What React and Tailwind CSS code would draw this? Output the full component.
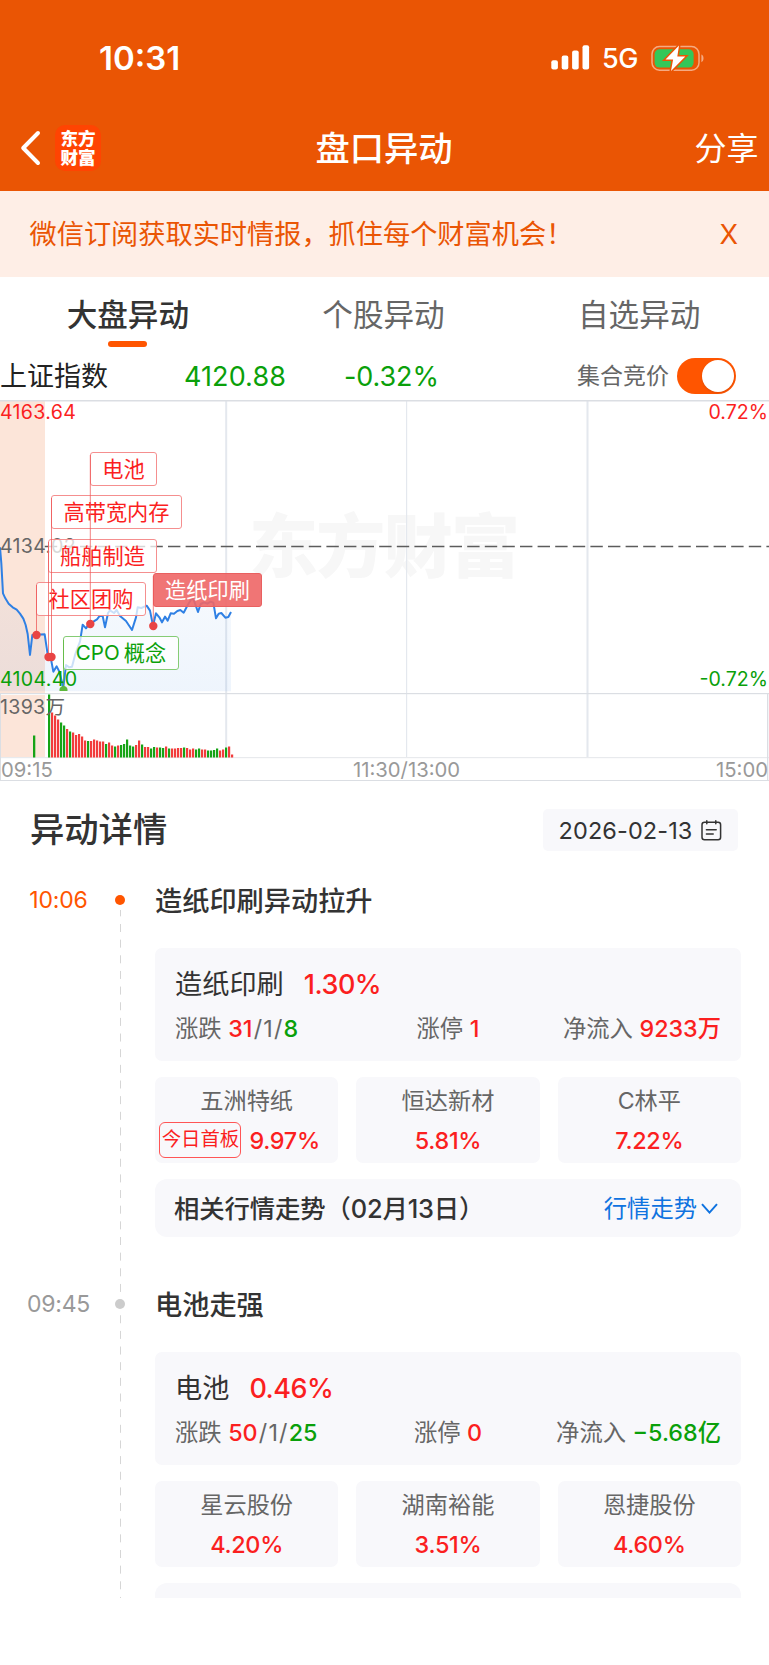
// Volume bars: [height, colour flag] every 3px, starting at the 09:30 bar
const VOLUME = [
  [63, 0], [45, 1], [42, 1], [38, 1], [35, 0], [32, 0], [28.5, 1], [26, 0], [25, 1], [22.5, 1], [23.5, 1], [21, 1],
  [17, 1], [16.5, 0], [16.5, 1], [18, 1], [17, 1], [16, 1], [16, 1], [13.5, 0], [15, 1], [12, 1], [11, 0], [12, 1], [12.5, 0], [13.5, 0],
  [18, 0], [12, 0], [11, 0], [12.5, 1], [17, 1], [13, 0], [10.5, 1], [10.5, 1], [9, 0], [10.5, 0], [10, 1], [10, 0], [9.5, 0], [11, 1],
  [9, 0], [9, 1], [9, 1], [9.5, 1], [9.5, 1], [10, 0], [9.5, 1], [8, 1], [9, 1], [8, 0], [9, 0], [8, 1], [8, 1], [7, 0], [7, 0], [7.5, 0],
  [9, 0], [7, 1], [8, 1], [10, 0], [11, 1], [3, 1],
];

const LINE =
  "0,52 4,100 9,190 16,205 26,221 38,232 50,239 60,251 70,266 77,285 83,312 90,375 97,315 134,313 144,380 152,382 160,425 170,409 178,425 190,472 198,405 208,412 216,410 226,372 240,335 248,284 258,295 268,280 280,275 291,268 299,258 308,258 315,292 324,249 330,241 342,249 350,240 360,258 378,273 396,300 408,262 413,232 424,234 440,227 450,242 459,287 468,250 478,262 486,277 495,260 503,272 512,250 522,251 532,243 541,240 551,248 562,227 576,204 582,212 594,246 602,222 612,217 622,221 632,215 640,218 648,265 656,251 664,249 676,263 685,261 693,246";

function Tag({ className, children }) {
  return (
    <div
      className={
        "absolute flex items-center justify-center whitespace-nowrap rounded-[3px] border pt-px text-[21.2px] leading-none " + className
      }
    >
      {children}
    </div>
  );
}

function StatusBar() {
  return (
    <div className="flex h-[106px] items-center justify-between pl-[99px] pr-[64px] pt-[10px]">
      <span className="text-[33px] font-semibold leading-none">10:31</span>
      <div className="flex items-center">
        <svg className="-mt-px" width="39" height="25" viewBox="0 0 39 25" fill="#fff">
          <rect x="0.3" y="15.3" width="6.6" height="9.2" rx="2" />
          <rect x="10.7" y="10.6" width="6.6" height="13.9" rx="2" />
          <rect x="21.1" y="5.4" width="6.6" height="19.1" rx="2" />
          <rect x="31.5" y="0.2" width="6.6" height="24.3" rx="2" />
        </svg>
        <span className="ml-[12px] mt-px w-[37px] text-[27px] font-medium leading-none tracking-[-0.5px]">5G</span>
        <svg className="-mt-px ml-[12px]" width="54" height="28" viewBox="0 0 54 28">
          <rect x="1" y="2.6" width="47" height="23.6" rx="7.5" fill="none" stroke="#f5aa82" strokeWidth="1.5" />
          <path d="M50.4 10.6c2.8 1 2.8 6.6 0 7.6z" fill="#f5aa82" />
          <rect x="3.6" y="5.2" width="39" height="18.4" rx="5" fill="#34c759" />
          <path d="M28 1.5 14.5 15.4h7.6L20 27 34.3 12.4h-8z" fill="#fff" stroke="#ea5504" strokeWidth="3" paintOrder="stroke" />
        </svg>
      </div>
    </div>
  );
}

function NavBar() {
  return (
    <div className="grid h-[85px] grid-cols-[1fr_auto_1fr] items-center pb-px">
      <div className="flex items-center pl-[20px]">
        <svg width="21" height="36" viewBox="0 0 21 36" fill="none" stroke="#fff" strokeWidth="4" strokeLinecap="round" strokeLinejoin="round">
          <path d="M18 3 3.2 18 18 33" />
        </svg>
        <div className="ml-[14px] flex h-[46px] w-[46px] flex-col items-center justify-center rounded-[10px] bg-[#ff4402] text-[17.6px] font-black leading-[19px]">
          <span>东方</span>
          <span>财富</span>
        </div>
      </div>
      <h1 className="pr-px pt-[2px] text-[34.3px] font-medium leading-none">盘口异动</h1>
      <span className="pr-[10.5px] pt-[2px] text-right text-[32px] leading-none">分享</span>
    </div>
  );
}

function Chart() {
  return (
    <div className="relative h-[381px] overflow-hidden">
      <svg className="absolute left-0 top-0" width="769" height="381" viewBox="0 400 769 381">
        <rect x="0" y="401" width="45" height="292" fill="#fce5d9" />
        <rect x="0" y="695" width="45" height="62" fill="#fce5d9" />
        <text x="249" y="572" fontSize="69" fontWeight="900" fill="#f7f7f7" textLength="271">东方财富</text>
        <g fill="#e4e8ee">
          <rect x="225.2" y="401" width="2" height="356" />
          <rect x="406" y="401" width="1.2" height="356" />
          <rect x="586.5" y="401" width="2" height="356" />
        </g>
        <g fill="#dbdee3">
          <rect x="0" y="400" width="769" height="1.5" />
          <rect x="0" y="693" width="769" height="1.2" />
          <rect x="0" y="757" width="769" height="1.2" fill="#e8eaed" />
          <rect x="0" y="780" width="769" height="1" />
          <rect x="0" y="693" width="1" height="88" />
          <rect x="767" y="693" width="1.3" height="88" />
        </g>
        <line x1="44.8" y1="546.5" x2="769" y2="546.5" stroke="#5c5c5c" strokeWidth="1.4" strokeDasharray="12.4 5.2" />
        <defs>
          <linearGradient id="area" x1="0" y1="0" x2="0" y2="1">
            <stop offset="0" stopColor="#2f7fe0" stopOpacity="0.03" />
            <stop offset="1" stopColor="#2f7fe0" stopOpacity="0.08" />
          </linearGradient>
        </defs>
        <g transform="translate(0 530) scale(0.33333)">
          <polygon points={"0,484 " + LINE + " 693,484"} fill="url(#area)" />
          <polyline points={LINE} fill="none" stroke="#2f80e4" strokeWidth="6" strokeLinejoin="round" />
        </g>
        <rect x="33" y="735.5" width="2.3" height="22" fill="#16a316" />
        {VOLUME.map(([h, up], i) => (
          <rect key={i} x={48 + i * 3} y={757.5 - h} width="2.2" height={h} fill={up ? "#f23c3c" : "#16a316"} />
        ))}
      </svg>

      <span className="absolute left-0 top-[3px] text-[19.6px] leading-none tracking-[0.3px] text-[#fb1f1f]">4163.64</span>
      <span className="absolute right-[1px] top-[3px] text-[19.6px] leading-none text-[#fb1f1f]">0.72%</span>
      <span className="absolute left-0 top-[137px] text-[19.6px] leading-none tracking-[0.3px] text-[#666]">4134.02</span>
      <span className="absolute right-[1px] top-[270px] text-[19.6px] leading-none text-[#0aa00a]">-0.72%</span>
      <span className="absolute left-0 top-[298px] text-[19.6px] leading-none tracking-[0.3px] text-[#666]">1393万</span>

      <Tag className="left-[90px] top-[52px] h-[34px] w-[67px] border-[#f58f8f] bg-white/75 text-[#fb1f1f]">电池</Tag>
      <Tag className="left-[51px] top-[95px] h-[34px] w-[131px] border-[#f58f8f] bg-white/75 text-[#fb1f1f]">高带宽内存</Tag>
      <Tag className="left-[48px] top-[139px] h-[34px] w-[109px] border-[#f58f8f] bg-white/75 text-[#fb1f1f]">船舶制造</Tag>
      <Tag className="left-[36px] top-[182px] h-[34px] w-[110px] border-[#f58f8f] bg-white/75 text-[#fb1f1f]">社区团购</Tag>
      <Tag className="left-[153px] top-[173px] h-[34px] w-[109px] border-[#e96060] bg-[#ee6666]/90 text-white">造纸印刷</Tag>
      <Tag className="left-[63px] top-[236px] h-[34px] w-[116px] gap-[4px] border-[#85cc75] bg-white/75 text-[#0aa00a]">
        <span className="text-[20.6px]">CPO</span>
        <span>概念</span>
      </Tag>

      <svg className="absolute left-0 top-0" width="769" height="381" viewBox="0 400 769 381">
        <g stroke="#ee5555" strokeOpacity="0.75" strokeWidth="1">
          <line x1="90.3" y1="455" x2="90.3" y2="624" />
          <line x1="51.5" y1="498" x2="51.5" y2="656" />
          <line x1="48.5" y1="542" x2="48.5" y2="656" />
          <line x1="36.5" y1="585" x2="36.5" y2="635" />
          <line x1="153.3" y1="576" x2="153.3" y2="626" />
          <line x1="63.5" y1="640" x2="63.5" y2="688" stroke="#5cb83c" />
        </g>
        <g fill="#e94444">
          <circle cx="36.5" cy="635" r="4.2" />
          <circle cx="48.5" cy="657" r="4.2" />
          <circle cx="51.5" cy="657" r="4.2" />
          <circle cx="90.3" cy="624" r="4.2" />
          <circle cx="153.3" cy="626" r="4.2" />
        </g>
        <path d="M59.5 691v-2a4.2 4.2 0 0 1 8 0v2z" fill="#5cb83c" />
      </svg>
      <span className="absolute left-0 top-[270px] text-[19.6px] leading-none tracking-[0.3px] text-[#0aa00a]">4104.40</span>

      <div className="absolute inset-x-0 bottom-0 grid h-[22px] grid-cols-[1fr_auto_1fr] items-center px-px text-[20.3px] leading-none text-[#999]">
        <span>09:15</span>
        <span className="pl-[44px]">11:30/13:00</span>
        <span className="text-right">15:00</span>
      </div>
    </div>
  );
}

function Stock({ name, pct, badge }) {
  return (
    <div className="flex h-[86px] flex-1 flex-col items-center rounded-[7px] bg-[#f8f8fb] pt-[12px]">
      <div className="text-[23.2px] leading-[24px] text-[#666]">{name}</div>
      <div className={"mt-[9px] flex h-[36px] items-center " + (badge ? "pr-[14px]" : "")}>
        {badge && (
          <span className="mr-[8px] flex h-[36px] w-[82px] items-center justify-center whitespace-nowrap rounded-[6px] border border-[#f55] text-[19.4px] leading-none text-[#fb1f1f]">
            {badge}
          </span>
        )}
        <span className="pt-px text-[23.4px] font-medium leading-none tracking-[-0.3px] text-[#fb1f1f]">{pct}</span>
      </div>
    </div>
  );
}

function Event({ time, active, title, sector, pct, up, flat, down, limit, flow, flowDown, stocks }) {
  return (
    <section className="flex h-[404px]">
      <div className={"w-[114px] pl-[3px] pt-[5px] text-center text-[23px] leading-none tracking-[-0.2px] " + (active ? "text-[#ff5500]" : "text-[#999]")}>
        {time}
      </div>
      <div className="flex h-[20px] w-[13px] items-center justify-center self-start bg-white pr-px mt-[6px]">
        <div className={"h-[10px] w-[10px] rounded-full " + (active ? "bg-[#ff5500]" : "bg-[#ccc]")} />
      </div>
      <div className="ml-[28px] w-[586px]">
        <h3 className="h-[64px] pt-[4px] text-[27.2px] font-medium leading-none text-[#333]">{title}</h3>
        <div className="h-[113px] rounded-[7px] bg-[#f8f8fb] px-[20px] pt-[23px]">
          <div className="flex items-center leading-[28px]">
            <span className="text-[27.2px] text-[#333]">{sector}</span>
            <span className="ml-[20px] text-[27px] font-medium tracking-[-0.5px] text-[#fb1f1f]">{pct}</span>
          </div>
          <div className="mt-[17px] grid grid-cols-[1fr_auto_1fr] text-[23.3px] leading-[26px] text-[#666]">
            <div>
              涨跌{" "}
              <span className="font-medium text-[#fb1f1f]">{up}</span>
              <span className="mx-[1.2px]">/</span>
              {flat}
              <span className="mx-[1.2px]">/</span>
              <span className="font-medium text-[#0aa00a]">{down}</span>
            </div>
            <div>
              涨停 <span className="font-medium text-[#fb1f1f]">{limit}</span>
            </div>
            <div className="text-right">
              净流入 <span className={"font-medium " + (flowDown ? "text-[#0aa00a]" : "text-[#fb1f1f]")}>{flow}</span>
            </div>
          </div>
        </div>
        <div className="mt-[16px] flex gap-[18px]">
          {stocks.map((s) => (
            <Stock key={s.name} {...s} />
          ))}
        </div>
        <div className="mt-[16px] flex h-[58px] items-center justify-between rounded-[12px] bg-[#f8f8fb] pl-[19px] pr-[23px] pt-[2px]">
          <span className="text-[25.4px] font-medium leading-none tracking-[-0.15px] text-[#333]">相关行情走势（02月13日）</span>
          <span className="flex items-center text-[23.3px] leading-none text-[#0f73e0]">
            行情走势
            <svg className="ml-[4px]" width="17" height="12" viewBox="0 0 17 12" fill="none" stroke="#0f73e0" strokeWidth="2">
              <path d="M1 1.2 8.5 9.6 16 1.2" />
            </svg>
          </span>
        </div>
      </div>
    </section>
  );
}

export default function App() {
  return (
    <div className="h-[1665px] w-[769px] overflow-hidden bg-white font-['Inter','Noto_Sans_CJK_SC',sans-serif]">
      <header className="h-[191px] bg-[#ea5504] text-white">
        <StatusBar />
        <NavBar />
      </header>

      <div className="flex h-[86px] items-center justify-between bg-[#feeee6] pl-[29.5px] pr-[31px] pt-[2px] text-[27.2px] leading-none text-[#ea5504]">
        <span>微信订阅获取实时情报，抓住每个财富机会！</span>
        <span>X</span>
      </div>

      <nav className="grid h-[76px] grid-cols-3 pr-[2px] pt-[22px] text-center text-[30.6px] leading-[31px] text-[#666]">
        <div className="flex flex-col items-center font-medium text-[#333]">
          大盘异动
          <div className="mt-[11px] h-[6px] w-[39px] rounded-full bg-[#ff5500]" />
        </div>
        <div>个股异动</div>
        <div>自选异动</div>
      </nav>

      <div className="flex h-[47px] items-center pb-px text-[27px] leading-none">
        <span className="w-[184px] text-[#222]">上证指数</span>
        <span className="w-[160px] tracking-[0.1px] text-[#0aa00a]">4120.88</span>
        <span className="tracking-[-0.1px] text-[#0aa00a]">-0.32%</span>
        <span className="ml-auto mr-[8px] text-[23px] text-[#666]">集合竞价</span>
        <div className="mr-[33px] flex h-[36px] w-[59px] items-center justify-end rounded-full bg-[#ff5500] pr-[2px]">
          <div className="h-[32px] w-[32px] rounded-full bg-white shadow" />
        </div>
      </div>

      <Chart />

      <div className="flex h-[97px] items-center justify-between pl-[30px] pr-[31px] pt-px">
        <h2 className="pt-px text-[34.3px] font-medium leading-none text-[#333]">异动详情</h2>
        <div className="flex h-[42px] w-[195px] items-center justify-center gap-[9px] rounded-[5px] bg-[#f8f8fb] text-[23.5px] leading-none text-[#333]">
          <span className="pt-px tracking-[0.1px]">2026-02-13</span>
          <svg width="21" height="21" viewBox="0 0 21 21" fill="none" stroke="#333" strokeWidth="1.5" strokeLinecap="round">
            <rect x="1" y="2.2" width="18.6" height="17.6" rx="2.5" />
            <path d="M5.8 0.8v3M14.8 0.8v3M5.4 9.8h9.8M5.4 14h6.8" />
          </svg>
        </div>
      </div>

      <main className="relative h-[720px] overflow-hidden">
        <svg className="absolute left-[120px] top-0" width="2" height="720">
          <line x1="0.5" y1="14.7" x2="0.5" y2="720" stroke="#d6d6d6" strokeWidth="1" strokeDasharray="8 7.65" />
        </svg>
        <div className="relative pt-[6px]">
          <Event
            active
            time="10:06"
            title="造纸印刷异动拉升"
            sector="造纸印刷"
            pct="1.30%"
            up="31"
            flat="1"
            down="8"
            limit="1"
            flow="9233万"
            stocks={[
              { name: "五洲特纸", pct: "9.97%", badge: "今日首板" },
              { name: "恒达新材", pct: "5.81%" },
              { name: "C林平", pct: "7.22%" },
            ]}
          />
          <Event
            time="09:45"
            title="电池走强"
            sector="电池"
            pct="0.46%"
            up="50"
            flat="1"
            down="25"
            limit="0"
            flow="−5.68亿"
            flowDown
            stocks={[
              { name: "星云股份", pct: "4.20%" },
              { name: "湖南裕能", pct: "3.51%" },
              { name: "恩捷股份", pct: "4.60%" },
            ]}
          />
        </div>
      </main>
    </div>
  );
}
